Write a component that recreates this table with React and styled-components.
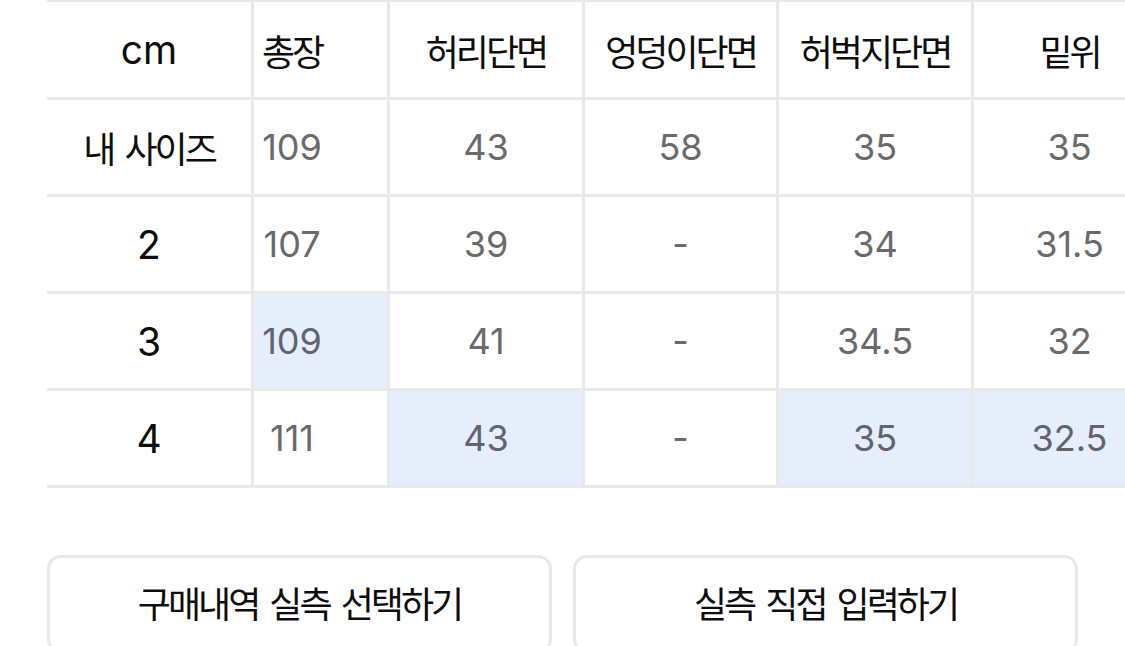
import React from "react";
import styled, { createGlobalStyle, css } from "styled-components";

const Global = createGlobalStyle`
  html, body {
    margin: 0;
    padding: 0;
    background: #ffffff;
    overflow: hidden;
  }
  body {
    font-family: "Inter", "Noto Sans CJK KR", sans-serif;
    color: #111;
  }
  * { box-sizing: border-box; }
`;

const Page = styled.div`
  width: 1125px;
  padding: 0 47px;
  display: flex;
  flex-direction: column;
`;

const TableWrap = styled.div`
  flex-shrink: 0;
  margin-right: -47px;
  overflow: hidden;
`;

const Table = styled.div`
  display: grid;
  grid-template-columns: 207px 136px 195px 194px 195px 194px;
  width: 1121px;
  border-top: 2px solid #e9e9e9;
`;

const koText = css`
  font-family: "Noto Sans CJK KR", sans-serif;
  font-size: 36px;
  letter-spacing: -3px;
  word-spacing: 6px;
  font-weight: 400;
`;

const Cell = styled.div`
  display: flex;
  align-items: center;
  justify-content: center;
  height: ${(p) => (p.$head ? 98 : 97)}px;
  border-right: 3px solid #e9e9e9;
  border-bottom: 3px solid #e9e9e9;
  padding-right: ${(p) => (p.$narrow ? 57 : 0)}px;
  background: ${(p) => (p.$hi ? "#e7eefb" : "#ffffff")};
  white-space: nowrap;
  line-height: 1;
`;

const HeadText = styled.span`
  color: #0d0d0d;
  ${(p) =>
    p.$ko
      ? koText
      : css`
          font-family: "Inter", sans-serif;
          font-size: 39px;
          font-weight: 400;
        `}
`;

const ValueText = styled.span`
  font-family: "Inter", sans-serif;
  font-size: 36px;
  color: ${(p) => (p.$hi ? "#5f6470" : "#6a6a6a")};
  font-weight: 400;
`;

const Buttons = styled.div`
  flex-shrink: 0;
  display: grid;
  grid-template-columns: 1fr 1fr;
  gap: 21px;
  margin-top: 67px;
`;

const Button = styled.button`
  height: 98px;
  background: #ffffff;
  border: 3px solid #e8e8e8;
  border-radius: 14px;
  display: flex;
  align-items: center;
  justify-content: center;
  color: #0d0d0d;
  padding: 0 0 4px;
  ${koText};
`;

const headers = ["cm", "총장", "허리단면", "엉덩이단면", "허벅지단면", "밑위"];

const rows = [
  { label: "내 사이즈", values: ["109", "43", "58", "35", "35"], hi: [] },
  { label: "2", values: ["107", "39", "-", "34", "31.5"], hi: [] },
  { label: "3", values: ["109", "41", "-", "34.5", "32"], hi: [0] },
  { label: "4", values: ["111", "43", "-", "35", "32.5"], hi: [1, 3, 4] },
];

const isKo = (t) => /[가-힣]/.test(t);

export default function App() {
  return (
    <>
      <Global />
      <Page>
        <TableWrap>
          <Table>
            {headers.map((h, i) => (
              <Cell key={h} $head $narrow={i === 1}>
                <HeadText $ko={isKo(h)}>{h}</HeadText>
              </Cell>
            ))}
            {rows.map((r) => (
              <React.Fragment key={r.label}>
                <Cell>
                  <HeadText $ko={isKo(r.label)}>{r.label}</HeadText>
                </Cell>
                {r.values.map((v, i) => {
                  const hi = r.hi.includes(i);
                  return (
                    <Cell key={i} $narrow={i === 0} $hi={hi}>
                      <ValueText $hi={hi}>{v}</ValueText>
                    </Cell>
                  );
                })}
              </React.Fragment>
            ))}
          </Table>
        </TableWrap>
        <Buttons>
          <Button>구매내역 실측 선택하기</Button>
          <Button>실측 직접 입력하기</Button>
        </Buttons>
      </Page>
    </>
  );
}
